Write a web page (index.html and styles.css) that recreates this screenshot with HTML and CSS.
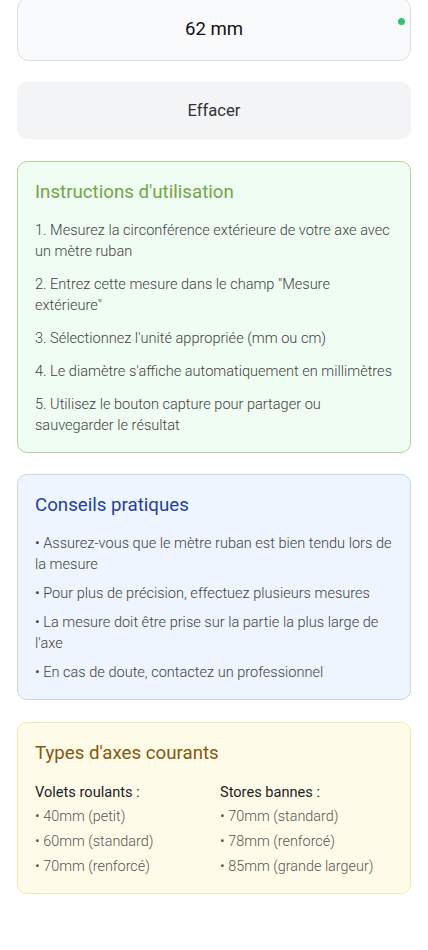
FILE: index.html
```html
<!DOCTYPE html>
<html lang="fr">
<head>
<meta charset="utf-8">
<meta name="viewport" content="width=device-width, initial-scale=1">
<title>Calcul diamètre axe</title>
<link rel="stylesheet" href="styles.css">
</head>
<body>
<main class="page">
  <div class="result">
    <span class="result-value">62 mm</span>
    <span class="status-dot"></span>
  </div>

  <button class="clear-btn" type="button">Effacer</button>

  <section class="card card-green">
    <h2 class="card-title">Instructions d'utilisation</h2>
    <ol class="steps">
      <li>1. Mesurez la circonférence extérieure de votre axe avec un mètre ruban</li>
      <li>2. Entrez cette mesure dans le champ "Mesure extérieure"</li>
      <li>3. Sélectionnez l'unité appropriée (mm ou cm)</li>
      <li>4. Le diamètre s'affiche automatiquement en millimètres</li>
      <li>5. Utilisez le bouton capture pour partager ou sauvegarder le résultat</li>
    </ol>
  </section>

  <section class="card card-blue">
    <h2 class="card-title">Conseils pratiques</h2>
    <ul class="tips">
      <li>• Assurez-vous que le mètre ruban est bien tendu lors de la mesure</li>
      <li>• Pour plus de précision, effectuez plusieurs mesures</li>
      <li>• La mesure doit être prise sur la partie la plus large de l'axe</li>
      <li>• En cas de doute, contactez un professionnel</li>
    </ul>
  </section>

  <section class="card card-yellow">
    <h2 class="card-title">Types d'axes courants</h2>
    <div class="types">
      <div class="type-col">
        <h3 class="type-head">Volets roulants :</h3>
        <ul class="type-list">
          <li>• 40mm (petit)</li>
          <li>• 60mm (standard)</li>
          <li>• 70mm (renforcé)</li>
        </ul>
      </div>
      <div class="type-col">
        <h3 class="type-head">Stores bannes :</h3>
        <ul class="type-list">
          <li>• 70mm (standard)</li>
          <li>• 78mm (renforcé)</li>
          <li>• 85mm (grande largeur)</li>
        </ul>
      </div>
    </div>
  </section>
</main>
</body>
</html>
```

FILE: styles.css
```css
* { box-sizing: border-box; }

html, body {
  margin: 0;
  padding: 0;
  background: #ffffff;
}

body {
  font-family: Roboto, "Noto Sans", "Liberation Sans", sans-serif;
  color: #222;
}

.page {
  padding: 0 17px 40px;
  display: flex;
  flex-direction: column;
  gap: 21.5px;
}

.result {
  position: relative;
  margin-top: -3.5px;
  height: 64px;
  display: flex;
  align-items: center;
  justify-content: center;
  background: #f9fafb;
  border: 1px solid #dcdee2;
  border-radius: 12px;
}

.result-value {
  font-size: 18.6px;
  color: #111;
}

.status-dot {
  position: absolute;
  top: 20px;
  right: 5px;
  width: 7px;
  height: 7px;
  border-radius: 50%;
  background: #2fc469;
}

.clear-btn {
  height: 57px;
  border: none;
  border-radius: 10px;
  background: #f3f4f6;
  font-family: inherit;
  font-size: 16.6px;
  color: #333;
  cursor: pointer;
}

.card {
  border: 1px solid;
  border-radius: 10px;
  padding: 17px 17px 16px;
}

.card-title {
  margin: 0 0 14px;
  font-size: 18.7px;
  line-height: 27px;
  font-weight: 400;
}

.card-green { background: #f0fdf2; border-color: #b3d39b; }
.card-green .card-title { color: #72a646; }

.card-blue { background: #eef5fe; border-color: #c5d8ec; }
.card-blue .card-title { color: #1e3fa6; }

.card-yellow { background: #fefce9; border-color: #f4eaa6; }
.card-yellow .card-title { color: #88560c; }

.steps, .tips, .type-list {
  list-style: none;
  margin: 0;
  padding: 0;
  display: flex;
  flex-direction: column;
  font-size: 14.55px;
  line-height: 21px;
  font-weight: 300;
  color: #3f3f3f;
}

.steps { gap: 12px; }
.tips { gap: 8px; }
.type-list { gap: 4px; color: #555; font-size: 14.4px; }

.types {
  display: grid;
  grid-template-columns: 1fr 1fr;
  column-gap: 12px;
}

.type-head {
  margin: 0 0 3px;
  font-size: 14.6px;
  line-height: 22px;
  font-weight: 400;
  color: #222;
}
```
